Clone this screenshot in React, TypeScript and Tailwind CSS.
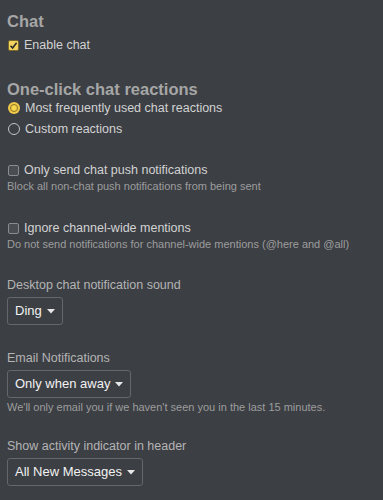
import type { FC, ReactNode } from "react";

const Caret: FC = () => (
  <svg width="8" height="5" viewBox="0 0 8 5" className="shrink-0">
    <path d="M0 0 L8 0 L4 4.5 Z" fill="#e8e8e8" />
  </svg>
);

const Select: FC<{ value: string; className?: string }> = ({ value, className }) => (
  <div className={`inline-flex items-center h-[28px] pl-[7px] pr-[7px] gap-[5px] border border-[#64676c] rounded-[3px] text-[13px] text-[#f2f2f2] ${className ?? ""}`}>
    <span>{value}</span>
    <Caret />
  </div>
);

const Checkbox: FC<{ checked?: boolean }> = ({ checked }) =>
  checked ? (
    <span className="flex items-center justify-center w-[11px] h-[11px] rounded-[2px] bg-[#f4d35e] border border-[#7a6a2a]">
      <svg width="9" height="9" viewBox="0 0 9 9">
        <path d="M1.5 4.8 L3.6 7 L7.6 1.8" stroke="#2a2a2a" strokeWidth="1.6" fill="none" />
      </svg>
    </span>
  ) : (
    <span className="w-[11px] h-[11px] rounded-[2px] bg-[#4a4d52] border border-[#8a8c90]" />
  );

const Radio: FC<{ checked?: boolean }> = ({ checked }) =>
  checked ? (
    <span className="flex items-center justify-center w-[12px] h-[12px] rounded-full bg-[#f0c94a]">
      <span className="w-[8px] h-[8px] rounded-full bg-[#f7d54c] border border-[#8c7428]" />
    </span>
  ) : (
    <span className="w-[12px] h-[12px] rounded-full border border-[#c4c4c4]" />
  );

const Row: FC<{ control: ReactNode; children: ReactNode; className?: string }> = ({ control, children, className }) => (
  <div className={`flex items-center h-[16px] pl-[1px] gap-[5px] text-[12.5px] leading-[16px] text-[#d2d2d2] ${className ?? ""}`}>
    {control}
    <span>{children}</span>
  </div>
);

const App: FC = () => {
  return (
    <div className="w-[383px] min-h-[500px] bg-[#3c3f44] pl-[7px] pt-[11px] font-['Liberation_Sans',Arial,sans-serif]">
      <h2 className="text-[16.5px] leading-[20px] font-bold text-[#a6a6a6]">Chat</h2>
      <Row control={<Checkbox checked />} className="mt-[6px]">Enable chat</Row>

      <h2 className="mt-[26px] text-[16.5px] leading-[20px] font-bold text-[#a6a6a6]">One-click chat reactions</h2>
      <Row control={<Radio checked />} className="mt-[1px]">Most frequently used chat reactions</Row>
      <Row control={<Radio />} className="mt-[5px]">Custom reactions</Row>

      <Row control={<Checkbox />} className="mt-[25px]">Only send chat push notifications</Row>
      <p className="mt-[1px] text-[11px] leading-[14px] text-[#9d9d9d]">Block all non-chat push notifications from being sent</p>

      <Row control={<Checkbox />} className="mt-[27px]">Ignore channel-wide mentions</Row>
      <p className="mt-[1px] text-[11px] leading-[14px] text-[#9d9d9d]">Do not send notifications for channel-wide mentions (@here and @all)</p>

      <p className="mt-[26px] text-[12.5px] leading-[16px] text-[#b4b4b4]">Desktop chat notification sound</p>
      <Select value="Ding" className="mt-[4px]" />

      <p className="mt-[25px] text-[12.5px] leading-[16px] text-[#b4b4b4]">Email Notifications</p>
      <Select value="Only when away" className="mt-[4px]" />
      <p className="mt-[2px] text-[11px] leading-[14px] text-[#9d9d9d]">We'll only email you if we haven't seen you in the last 15 minutes.</p>

      <p className="mt-[24px] text-[12.5px] leading-[16px] text-[#b4b4b4]">Show activity indicator in header</p>
      <Select value="All New Messages" className="mt-[4px]" />
    </div>
  );
};

export default App;
